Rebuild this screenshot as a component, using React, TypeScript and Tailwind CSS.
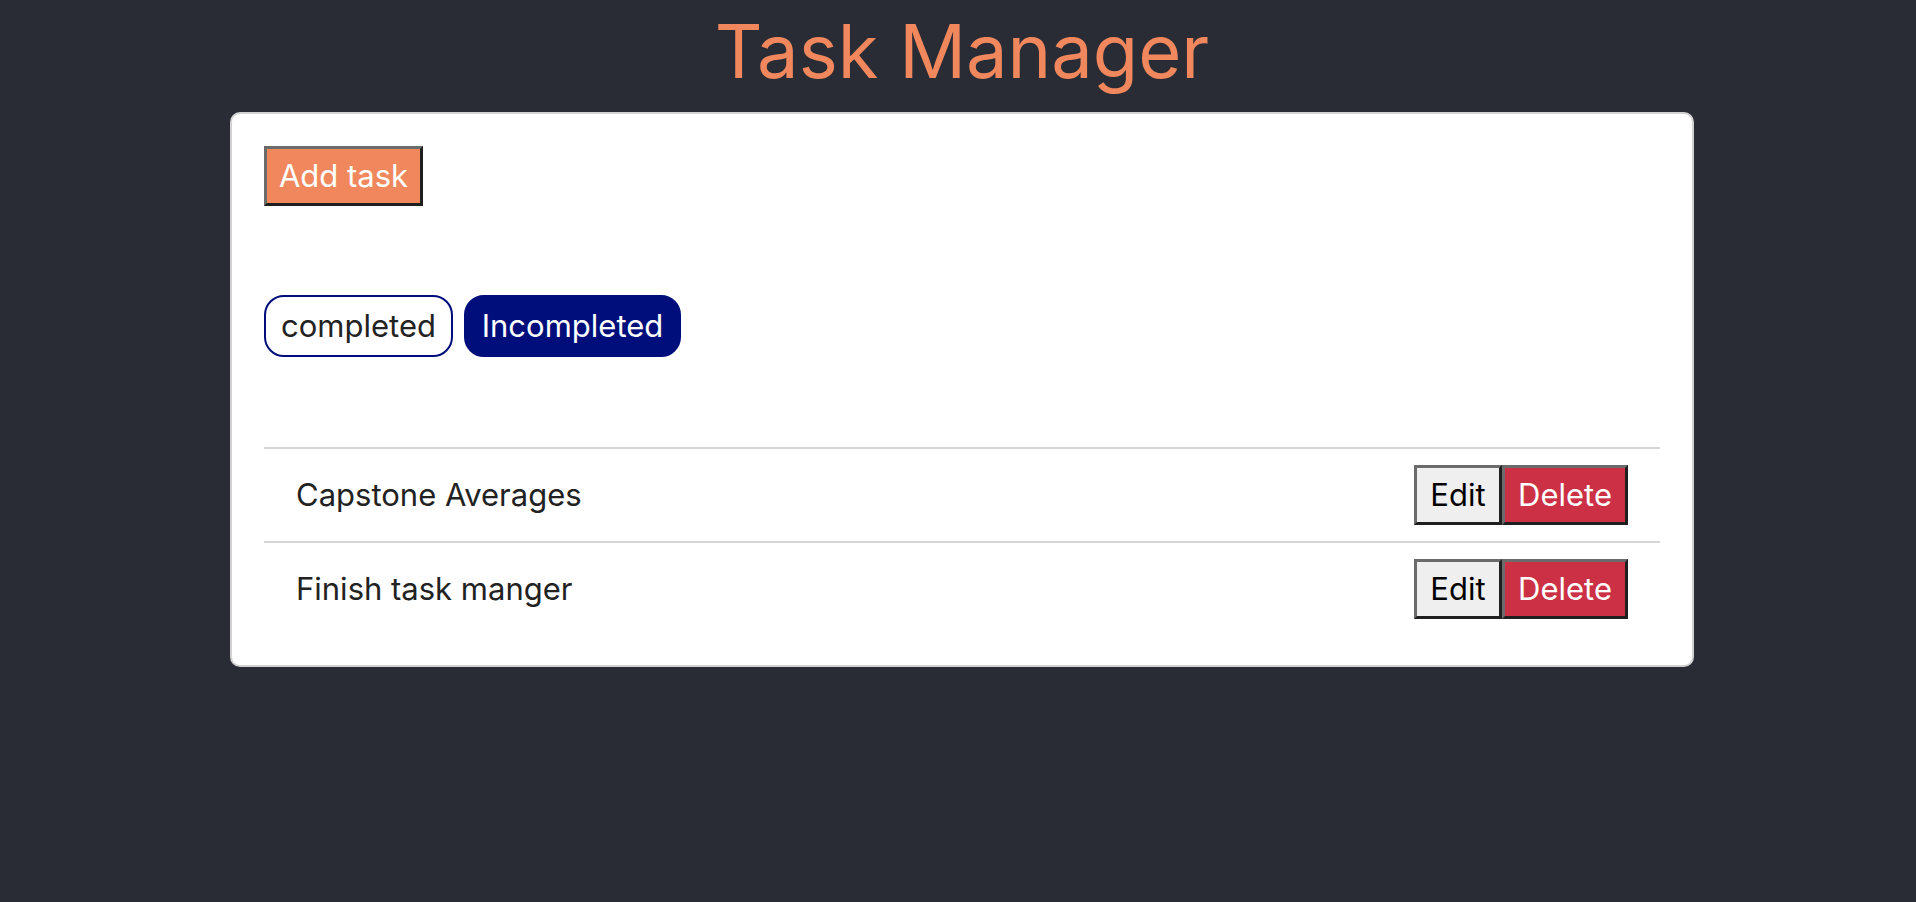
import React, { useState } from "react";

interface Task {
  id: number;
  title: string;
  completed: boolean;
}

const initialTasks: Task[] = [
  { id: 1, title: "Capstone Averages", completed: false },
  { id: 2, title: "Finish task manger", completed: false },
];

const App = () => {
  const [tasks] = useState<Task[]>(initialTasks);
  const [filter, setFilter] = useState<"completed" | "incompleted">(
    "incompleted"
  );

  const shown = tasks.filter((t) =>
    filter === "completed" ? t.completed : !t.completed
  );

  return (
    <div
      className="min-h-screen w-full bg-[#292c34]"
      style={{ fontFamily: "Inter, 'Noto Sans', sans-serif" }}
    >
      <div className="ml-[230px] w-[1464px]">
        <h1 className="pt-[6px] text-center text-[74px] leading-[90px] font-normal text-[#f0875d]">
          Task Manager
        </h1>

        <div className="mt-[16px] rounded-[10px] border-2 border-[#d2d2d2] bg-white px-[32px] pt-[32px] pb-[30px]">
          <button
            type="button"
            className="flex h-[60px] w-[159px] items-center justify-center border-[3px] border-t-[#6b6b6b] border-l-[#6b6b6b] border-r-[#1f1f1f] border-b-[#1f1f1f] bg-[#f0875d] text-[31px] text-white"
          >
            Add task
          </button>

          <div className="mt-[89px] flex gap-[11px]">
            <button
              type="button"
              onClick={() => setFilter("completed")}
              className={
                filter === "completed"
                  ? "flex h-[62px] w-[189px] items-center justify-center rounded-[20px] border-2 border-[#000e7c] bg-[#000e7c] text-[31px] text-white"
                  : "flex h-[62px] w-[189px] items-center justify-center rounded-[20px] border-2 border-[#000e7c] bg-white text-[31px] text-[#222222]"
              }
            >
              completed
            </button>
            <button
              type="button"
              onClick={() => setFilter("incompleted")}
              className={
                filter === "incompleted"
                  ? "flex h-[62px] w-[217px] items-center justify-center rounded-[20px] border-2 border-[#000e7c] bg-[#000e7c] text-[31px] text-white"
                  : "flex h-[62px] w-[217px] items-center justify-center rounded-[20px] border-2 border-[#000e7c] bg-white text-[31px] text-[#222222]"
              }
            >
              Incompleted
            </button>
          </div>

          <ul className="mt-[90px]">
            {shown.map((task) => (
              <li
                key={task.id}
                className="flex h-[94px] items-center justify-between border-t-2 border-[#d6d6d6] px-[32px]"
              >
                <span className="text-[31px] text-[#222222]">{task.title}</span>
                <div className="flex">
                  <button
                    type="button"
                    className="flex h-[60px] w-[88px] items-center justify-center border-[3px] border-t-[#6b6b6b] border-l-[#6b6b6b] border-r-[#1f1f1f] border-b-[#1f1f1f] bg-[#efefef] text-[31px] text-black"
                  >
                    Edit
                  </button>
                  <button
                    type="button"
                    className="flex h-[60px] w-[126px] items-center justify-center border-[3px] border-t-[#6b6b6b] border-l-[#6b6b6b] border-r-[#1f1f1f] border-b-[#1f1f1f] bg-[#cc3045] text-[31px] text-white"
                  >
                    Delete
                  </button>
                </div>
              </li>
            ))}
          </ul>
        </div>
      </div>
    </div>
  );
};

export default App;
